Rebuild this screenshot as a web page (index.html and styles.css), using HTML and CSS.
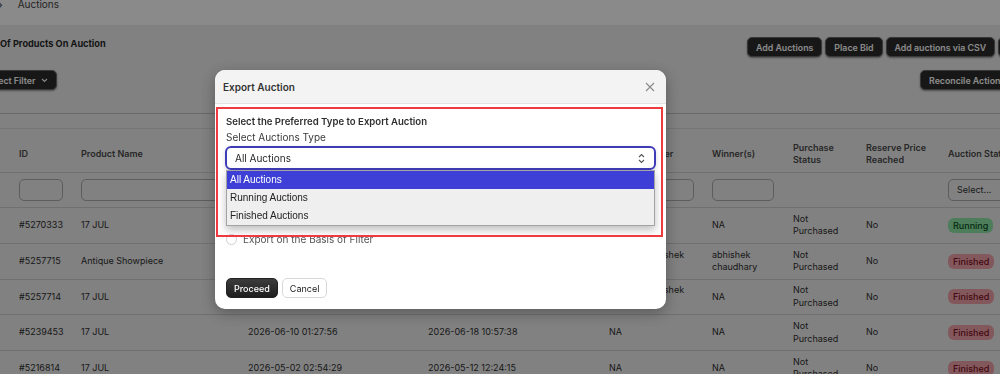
FILE: index.html
```html
<!DOCTYPE html>
<html lang="en">
<head>
  <meta charset="UTF-8" />
  <meta name="viewport" content="width=device-width, initial-scale=1.0"/>
  <title>Auctions</title>
  <link rel="stylesheet" href="styles.css">
</head>
<body>
  <nav class="crumbs">
    <span class="sep">›</span>
    <span>Auctions</span>
  </nav>

  <main class="content">
    <div class="head-row">
      <h2 class="title">Of Products On Auction</h2>
      <div class="actions">
        <button class="btn">Add Auctions</button>
        <button class="btn">Place Bid</button>
        <button class="btn">Add auctions via CSV</button>
        <button class="btn">Export Auctions</button>
      </div>
    </div>

    <div class="tool-row">
      <div class="tool-left">
        <button class="btn filter">Select Filter
          <svg width="7" height="5" viewBox="0 0 7 5"><path d="M1 1 L3.5 3.5 L6 1" fill="none" stroke="currentColor" stroke-width="1.1"/></svg>
        </button>
      </div>
      <button class="btn">Reconcile Actions</button>
    </div>

    <div class="card">
      <table class="grid">
        <colgroup>
          <col style="width:69px"><col style="width:167px"><col style="width:180px"><col style="width:181px">
          <col style="width:103px"><col style="width:81px"><col style="width:73px"><col style="width:82px"><col style="width:110px">
        </colgroup>
        <thead>
          <tr>
            <th>ID</th>
            <th>Product Name</th>
            <th>Start Date</th>
            <th>End Date</th>
            <th>Highest Bidder</th>
            <th>Winner(s)</th>
            <th>Purchase<br>Status</th>
            <th>Reserve Price<br>Reached</th>
            <th>Auction Status</th>
          </tr>
        </thead>
        <tbody>
          <tr class="filters">
            <td><input class="field w-id"></td>
            <td><input class="field w-name"></td>
            <td></td>
            <td></td>
            <td><input class="field w-bidder"></td>
            <td><input class="field w-winner"></td>
            <td></td>
            <td></td>
            <td>
              <div class="field status-select">Select...
                <svg width="7" height="11" viewBox="0 0 7 11"><path d="M1 4 L3.5 1.5 L6 4 M1 7 L3.5 9.5 L6 7" fill="none" stroke="currentColor" stroke-width="1.1"/></svg>
              </div>
            </td>
          </tr>
          <tr>
            <td>#5270333</td>
            <td>17 JUL</td>
            <td>2026-07-10 11:05:12</td>
            <td>2026-07-20 11:05:12</td>
            <td>NA</td>
            <td>NA</td>
            <td>Not<br>Purchased</td>
            <td>No</td>
            <td><span class="badge running">Running</span></td>
          </tr>
          <tr>
            <td>#5257715</td>
            <td>Antique Showpiece</td>
            <td>2026-06-28 09:14:40</td>
            <td>2026-07-05 09:14:40</td>
            <td>Prakash abhishek<br>chaudhary</td>
            <td>abhishek<br>chaudhary</td>
            <td>Not<br>Purchased</td>
            <td>No</td>
            <td><span class="badge finished">Finished</span></td>
          </tr>
          <tr>
            <td>#5257714</td>
            <td>17 JUL</td>
            <td>2026-06-27 18:40:03</td>
            <td>2026-07-04 18:40:03</td>
            <td>Prakash abhishek<br>chaudhary</td>
            <td>NA</td>
            <td>Not<br>Purchased</td>
            <td>No</td>
            <td><span class="badge finished">Finished</span></td>
          </tr>
          <tr>
            <td>#5239453</td>
            <td>17 JUL</td>
            <td>2026-06-10 01:27:56</td>
            <td>2026-06-18 10:57:38</td>
            <td>NA</td>
            <td>NA</td>
            <td>Not<br>Purchased</td>
            <td>No</td>
            <td><span class="badge finished">Finished</span></td>
          </tr>
          <tr>
            <td>#5216814</td>
            <td>17 JUL</td>
            <td>2026-05-02 02:54:29</td>
            <td>2026-05-12 12:24:15</td>
            <td>NA</td>
            <td>NA</td>
            <td>Not<br>Purchased</td>
            <td>No</td>
            <td><span class="badge finished">Finished</span></td>
          </tr>
        </tbody>
      </table>
    </div>
  </main>

  <div class="backdrop"></div>

  <div class="modal">
    <div class="modal-head">
      <span>Export Auction</span>
      <svg class="close" width="10" height="10" viewBox="0 0 10 10"><path d="M1 1 L9 9 M9 1 L1 9" stroke="currentColor" stroke-width="1.1"/></svg>
    </div>
    <div class="modal-body">
      <p class="lead">Select the Preferred Type to Export Auction</p>
      <p class="label">Select Auctions Type</p>
      <div class="select-wrap">
        <div class="select">
          <span>All Auctions</span>
          <svg width="7" height="11" viewBox="0 0 7 11"><path d="M1 4 L3.5 1.5 L6 4 M1 7 L3.5 9.5 L6 7" fill="none" stroke="currentColor" stroke-width="1.1"/></svg>
        </div>
        <ul class="options">
          <li class="option active">All Auctions</li>
          <li class="option">Running Auctions</li>
          <li class="option">Finished Auctions</li>
        </ul>
      </div>
      <label class="radio-row">
        <span class="radio"></span>
        Export on the Basis of Filter
      </label>
      <div class="modal-foot">
        <button class="proceed">Proceed</button>
        <button class="cancel">Cancel</button>
      </div>
    </div>
    <div class="highlight"></div>
  </div>
</body>
</html>
```

FILE: styles.css
```css
* {
  box-sizing: border-box;
  margin: 0;
  padding: 0;
}

body {
  font-family: Inter, "Noto Sans", sans-serif;
  font-size: 9px;
  color: #333;
  background: #eeeeee;
  width: 1000px;
  height: 374px;
  overflow: hidden;
  position: relative;
}

button {
  font-family: inherit;
  cursor: pointer;
}

/* breadcrumb */
.crumbs {
  height: 25px;
  background: #fff;
  display: flex;
  align-items: flex-start;
  gap: 15px;
  margin-left: -2px;
  font-size: 10px;
  line-height: 9px;
  color: #444;
}

.sep {
  font-size: 12px;
}

/* top toolbar */
.content {
  padding-top: 12px;
}

.head-row {
  display: flex;
  align-items: flex-start;
  height: 20px;
}

.title {
  flex: 0 0 747px;
  font-size: 9.2px;
  font-weight: 700;
  line-height: 14px;
  color: #2a2a2a;
}

.actions {
  display: flex;
  gap: 3px;
  flex-shrink: 0;
}

.btn {
  flex-shrink: 0;
  height: 20px;
  padding: 0 8px;
  background: #2c2c2c;
  color: #fff;
  border: 1px solid #6a6a6a;
  border-radius: 5px;
  font-size: 8.8px;
  font-weight: 600;
  white-space: nowrap;
  box-shadow: 0 1px 2px rgba(0, 0, 0, 0.4);
}

.tool-row {
  display: flex;
  margin-top: 13px;
}

.tool-left {
  flex: 0 0 920px;
}

.btn.filter {
  margin-left: -24px;
  display: inline-flex;
  align-items: center;
  gap: 5px;
}

/* table card */
.card {
  margin-top: 23px;
  border-top: 1px solid #c2c2c2;
  padding-top: 14px;
}

.grid {
  border-collapse: collapse;
  table-layout: fixed;
  width: 1046px;
  border-top: 1px solid #d8d8d8;
}

.grid th {
  height: 44px;
  padding: 7px 12px 0;
  text-align: left;
  font-weight: 600;
  line-height: 12.5px;
  color: #4a4a4a;
  white-space: nowrap;
  border-bottom: 1px solid #cfcfcf;
}

.grid td {
  height: 35.75px;
  padding: 0 12px;
  line-height: 12.5px;
  color: #2e2e2e;
  border-bottom: 1px solid #cfcfcf;
  white-space: nowrap;
}

.grid th:first-child,
.grid td:first-child {
  padding-left: 19px;
  padding-right: 4px;
}

.grid .filters td {
  height: 35px;
}

.field {
  display: block;
  height: 22px;
  border: 1px solid #acacac;
  border-radius: 5px;
  background: transparent;
}

.w-id { width: 44px; }
.w-name { width: 150px; }
.w-bidder { width: 85px; }
.w-winner { width: 62px; }

.status-select {
  width: 80px;
  display: flex;
  align-items: center;
  justify-content: space-between;
  padding: 0 12px 0 8px;
  color: #333;
}

.badge {
  display: inline-block;
  height: 15px;
  line-height: 15px;
  padding: 0 5px;
  border-radius: 6px;
  font-weight: 500;
}

.running {
  background: #8ee8a6;
  color: #0a4f1f;
}

.finished {
  background: #f2a3ab;
  color: #7d0f1e;
}

/* modal */
.backdrop {
  position: fixed;
  inset: 0;
  background: rgba(0, 0, 0, 0.46);
}

.modal {
  position: absolute;
  left: 215px;
  top: 70px;
  width: 451px;
  background: #fff;
  border-radius: 10px;
  box-shadow: 0 4px 14px rgba(0, 0, 0, 0.3);
}

.modal-head {
  height: 34px;
  padding: 0 11px 0 8px;
  display: flex;
  align-items: center;
  justify-content: space-between;
  background: #f3f3f3;
  border-bottom: 1px solid #e2e2e2;
  border-radius: 10px 10px 0 0;
  font-size: 10px;
  font-weight: 600;
  color: #333;
}

.close {
  color: #8a8a8a;
}

.modal-body {
  padding: 11px;
}

.lead {
  font-size: 9.6px;
  font-weight: 600;
  line-height: 14px;
  color: #2e2e2e;
}

.label {
  margin-top: 1px;
  font-size: 10px;
  line-height: 14px;
  color: #3a3a3a;
}

.select-wrap {
  position: relative;
  margin-top: 2px;
}

.select {
  height: 24px;
  margin: 0 -1px;
  padding: 0 9px 0 8px;
  display: flex;
  align-items: center;
  justify-content: space-between;
  border: 2px solid #3f3cb8;
  border-radius: 6px;
  font-size: 10px;
  color: #2a2a2a;
  box-shadow: 0 2px 5px rgba(0, 0, 0, 0.15);
}

.select svg {
  color: #555;
}

.options {
  position: absolute;
  left: 0;
  right: 0;
  top: 24px;
  list-style: none;
  background: #efefef;
  border: 1px solid #a3a3a3;
  box-shadow: 0 4px 8px rgba(0, 0, 0, 0.25);
  font-family: "Liberation Sans", Arial, sans-serif;
  font-size: 10px;
  color: #222;
  z-index: 1;
}

.option {
  height: 18px;
  line-height: 18px;
  padding-left: 3px;
}

.option.active {
  background: #3d3fd6;
  color: #fff;
}

.radio-row {
  margin-top: 62px;
  display: flex;
  align-items: center;
  gap: 6px;
  font-size: 10px;
  line-height: 14px;
  color: #555;
}

.radio {
  width: 11px;
  height: 11px;
  border: 1px solid #cfcfcf;
  border-radius: 50%;
}

.modal-foot {
  margin-top: 32px;
  display: flex;
  gap: 4px;
}

.proceed {
  height: 20px;
  padding: 0 7px;
  background: linear-gradient(#3c3c3c, #1e1e1e);
  color: #fff;
  border: 1px solid #222;
  border-radius: 5px;
  font-size: 9px;
  font-weight: 500;
}

.cancel {
  height: 20px;
  padding: 0 7px;
  background: #fff;
  color: #222;
  border: 1px solid #d8d8d8;
  border-radius: 5px;
  font-size: 9px;
}

/* red marker drawn over the select block */
.highlight {
  position: absolute;
  left: 1px;
  top: 37px;
  width: 447px;
  height: 130px;
  border: 2px solid #ee3b3f;
  pointer-events: none;
  z-index: 2;
}
```
